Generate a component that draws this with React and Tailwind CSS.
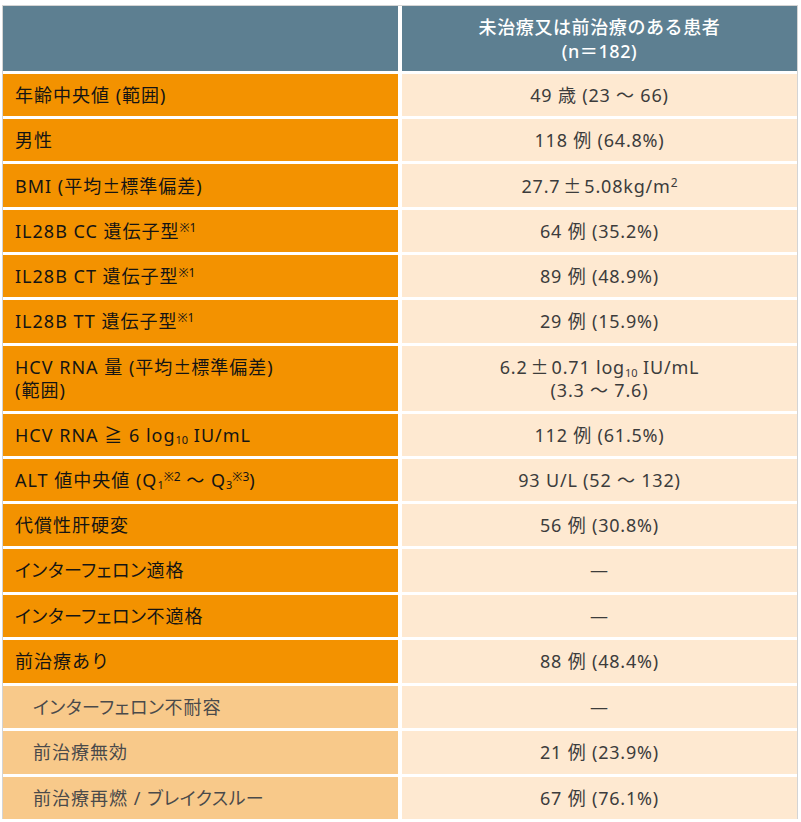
function Pm({ className = "" }) {
  return (
    <span
      className={`inline-block w-[1em] text-center ${className}`}
      style={{ fontFamily: '"Noto Sans CJK JP", sans-serif' }}
    >
      ±
    </span>
  );
}

function Sup({ children }) {
  return <sup className="text-[12px] tracking-normal">{children}</sup>;
}

function Sub({ children }) {
  return <sub className="text-[11px] tracking-normal">{children}</sub>;
}

// katakana in the reference is set proportionally
function Kana({ children }) {
  return <span className="[font-feature-settings:'palt'] tracking-[0.5px]">{children}</span>;
}

const rows = [
  { label: "年齢中央値 (範囲)", value: "49 歳 (23 ～ 66)", h: "h-[42px]" },
  { label: "男性", value: "118 例 (64.8%)", h: "h-[42px]" },
  {
    label: (
      <>
        BMI (平均<Pm />標準偏差)
      </>
    ),
    value: (
      <>
        27.7<Pm className="mx-[3px]" />5.08kg/m<Sup>2</Sup>
      </>
    ),
    h: "h-[43px]",
  },
  {
    label: (
      <>
        IL28B CC 遺伝子型<Sup>※1</Sup>
      </>
    ),
    value: "64 例 (35.2%)",
    h: "h-[42px]",
  },
  {
    label: (
      <>
        IL28B CT 遺伝子型<Sup>※1</Sup>
      </>
    ),
    value: "89 例 (48.9%)",
    h: "h-[42px]",
  },
  {
    label: (
      <>
        IL28B TT 遺伝子型<Sup>※1</Sup>
      </>
    ),
    value: "29 例 (15.9%)",
    h: "h-[43px]",
  },
  {
    label: (
      <>
        HCV RNA 量 (平均<Pm />標準偏差)
        <br />
        (範囲)
      </>
    ),
    value: (
      <>
        6.2<Pm className="mx-[3px]" />0.71 log<Sub>10</Sub> IU/mL
        <br />
        (3.3 ～ 7.6)
      </>
    ),
    h: "h-[65px]",
  },
  {
    label: (
      <>
        HCV RNA ≧ 6 log<Sub>10</Sub> IU/mL
      </>
    ),
    value: "112 例 (61.5%)",
    h: "h-[42px]",
  },
  {
    label: (
      <>
        ALT 値中央値 (Q<Sub>1</Sub>
        <Sup>※2</Sup> ～ Q<Sub>3</Sub>
        <Sup>※3</Sup>)
      </>
    ),
    value: "93 U/L (52 ～ 132)",
    h: "h-[42px]",
  },
  { label: "代償性肝硬変", value: "56 例 (30.8%)", h: "h-[42px]" },
  {
    label: (
      <>
        <Kana>インターフェロン</Kana>適格
      </>
    ),
    value: "—",
    h: "h-[43px]",
  },
  {
    label: (
      <>
        <Kana>インターフェロン</Kana>不適格
      </>
    ),
    value: "—",
    h: "h-[42px]",
  },
  { label: "前治療あり", value: "88 例 (48.4%)", h: "h-[43px]" },
  {
    label: (
      <>
        <Kana>インターフェロン</Kana>不耐容
      </>
    ),
    value: "—",
    h: "h-[42px]",
    sub: true,
  },
  { label: "前治療無効", value: "21 例 (23.9%)", h: "h-[43px]", sub: true },
  {
    label: (
      <>
        前治療再燃 / <Kana>ブレイクスルー</Kana>
      </>
    ),
    value: "67 例 (76.1%)",
    h: "h-[42px]",
    sub: true,
  },
];

export default function App() {
  return (
    <div
      className="min-h-[822px] w-[801px] bg-white pt-[5px] pl-[2px]"
      style={{ fontFamily: '"Noto Sans", "Noto Sans CJK JP", sans-serif' }}
    >
      <div className="w-[796px] border-x border-t border-[#d4d4d4]">
        <div className="grid grid-cols-2 gap-x-[4px] gap-y-[3px]">
          {/* header */}
          <div className="h-[65px] bg-[#5d7f91]" />
          <div className="flex h-[65px] items-center justify-center bg-[#5d7f91] text-center text-[18px] leading-[24px] font-medium tracking-[0.6px] text-white">
            <p>
              未治療又は前治療のある患者
              <br />
              (n＝182)
            </p>
          </div>

          {rows.map((row, i) => (
            <Row key={i} row={row} />
          ))}
        </div>
      </div>
    </div>
  );
}

function Row({ row }) {
  return (
    <>
      <div
        className={`flex items-center text-[18px] leading-[23px] tracking-[1px] ${row.h} ${
          row.sub
            ? "bg-[#f8c98a] pl-[30px] text-[#4a4a4a]"
            : "bg-[#f39200] pl-[12px] text-[#141414]"
        }`}
      >
        <p>{row.label}</p>
      </div>
      <div
        className={`flex items-center justify-center bg-[#fee9d1] text-center text-[18px] leading-[23px] tracking-[0.8px] text-[#3c3c3c] ${row.h}`}
      >
        <p>{row.value}</p>
      </div>
    </>
  );
}
